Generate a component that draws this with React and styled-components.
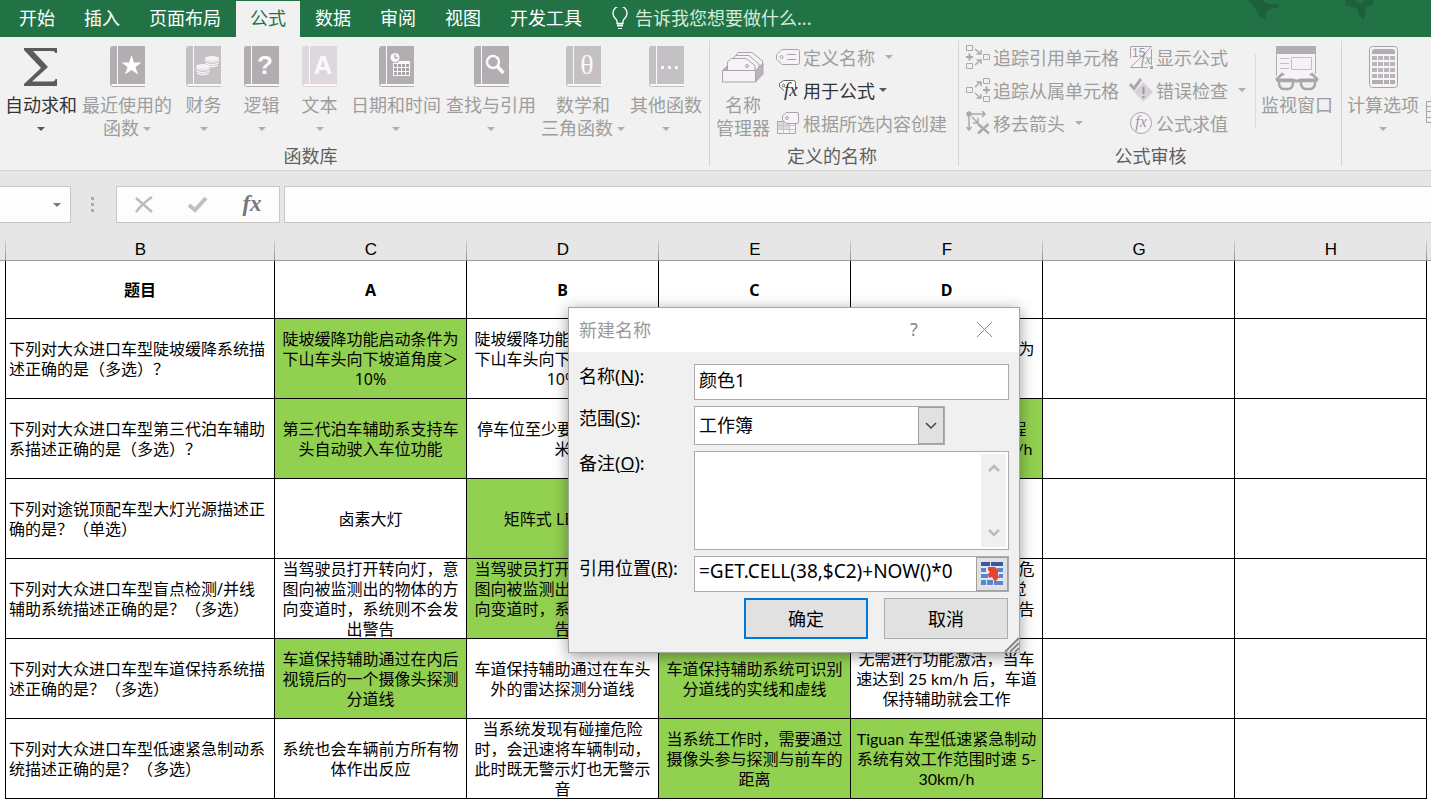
// App.jsx
import React, { useState } from "react";
import styled, { createGlobalStyle } from "styled-components";

const GRAY = "#b1adb1";
const LIGHT = "#c4c1c4";
const LINE = "#a9a4a9";

/* ---------- data ---------- */

const tabs = [
  "开始",
  "插入",
  "页面布局",
  "公式",
  "数据",
  "审阅",
  "视图",
  "开发工具",
];

const columns = [
  { id: "", width: 6 },
  { id: "B", width: 269 },
  { id: "C", width: 192 },
  { id: "D", width: 192 },
  { id: "E", width: 192 },
  { id: "F", width: 192 },
  { id: "G", width: 192 },
  { id: "H", width: 192 },
];

// every row: question, then the four options; right = index of the green options
const rows = [
  {
    cells: [
      "下列对大众进口车型陡坡缓降系统描\n述正确的是（多选）？",
      "陡坡缓降功能启动条件为\n下山车头向下坡道角度＞\n10%",
      "陡坡缓降功能启动条件为\n下山车头向下坡道角度＜\n10%",
      "",
      "陡坡缓降功能启动条件为\n任意角度",
    ],
    right: [1],
  },
  {
    cells: [
      "下列对大众进口车型第三代泊车辅助\n系描述正确的是（多选）？",
      "第三代泊车辅助系支持车\n头自动驶入车位功能",
      "停车位至少要比车长 0.8\n米",
      "",
      "第三代泊车辅助的过程\n中车速不能超过40 km/h",
    ],
    right: [1, 4],
  },
  {
    cells: [
      "下列对途锐顶配车型大灯光源描述正\n确的是？（单选）",
      "卤素大灯",
      "矩阵式 LED 大灯",
      "",
      "",
    ],
    right: [2],
  },
  {
    cells: [
      "下列对大众进口车型盲点检测/并线\n辅助系统描述正确的是？（多选）",
      "当驾驶员打开转向灯，意\n图向被监测出的物体的方\n向变道时，系统则不会发\n出警告",
      "当驾驶员打开转向灯，意\n图向被监测出的物体的方\n向变道时，系统会发出警\n告",
      "",
      "当驾驶员变道时如存在危\n险系统会同时发出视觉\n提示并通过灯光进行警告\n驾驶员",
    ],
    right: [2],
  },
  {
    cells: [
      "下列对大众进口车型车道保持系统描\n述正确的是？（多选）",
      "车道保持辅助通过在内后\n视镜后的一个摄像头探测\n分道线",
      "车道保持辅助通过在车头\n外的雷达探测分道线",
      "车道保持辅助系统可识别\n分道线的实线和虚线",
      "无需进行功能激活，当车\n速达到 25 km/h 后，车道\n保持辅助就会工作",
    ],
    right: [1, 3],
  },
  {
    cells: [
      "下列对大众进口车型低速紧急制动系\n统描述正确的是？（多选）",
      "系统也会车辆前方所有物\n体作出反应",
      "当系统发现有碰撞危险\n时，会迅速将车辆制动，\n此时既无警示灯也无警示\n音",
      "当系统工作时，需要通过\n摄像头参与探测与前车的\n距离",
      "Tiguan 车型低速紧急制动\n系统有效工作范围时速 5-\n30km/h",
    ],
    right: [3, 4],
  },
];

/* ---------- icons ---------- */

const Book = ({ color = GRAY, children }) => (
  <svg width="35" height="41" viewBox="0 0 35 41" fill="none">
    <path d="M3 0H7V38H3Q1 38 0 39V3Q0 0 3 0Z" fill={color} />
    <path d="M8 0H35V38H8Z" fill={color} />
    <path d="M0 38.500Q1 40.500 3 40.500H35" stroke={color} />
    <path d="M2 39H35" stroke="#fbf7fb" strokeWidth="2" />
    <path d="M7.500 0V38" stroke="#fbf7fb" />
    {children}
  </svg>
);

const SigmaIcon = () => (
  <svg width="34" height="41" viewBox="0 -2 34 41">
    <path
      d="M0 0H33V5H31.500Q31 3 28 3H9L24 19L8 33.500H28Q31 33.500 31.500 31H33V38H0V36L17 20L0 2Z"
      fill="#5b5b5b"
    />
  </svg>
);

const StarBook = () => (
  <Book>
    <path
      d="M21.500 9L24 16.500H31.500L25.500 21L28 28.500L21.500 24L15 28.500L17.500 21L11.500 16.500H19Z"
      fill="#fff"
    />
  </Book>
);

const Coins = ({ x, y }) => (
  <g transform={`translate(${x} ${y})`}>
    <ellipse cx="7" cy="2.500" rx="7" ry="2.500" fill="#f6f2f6" />
    <path
      d="M0 4Q7 8.500 14 4M0 6.500Q7 11 14 6.500M1 9Q7 12.500 13 9"
      stroke="#f6f2f6"
      strokeWidth="1.300"
    />
  </g>
);

const CoinBook = () => (
  <Book color={LIGHT}>
    <Coins x={19} y={10} />
    <Coins x={10} y={18} />
  </Book>
);

const LetterBook = ({ letter, color, serif }) => (
  <Book color={color}>
    <text
      x="21"
      y="28"
      textAnchor="middle"
      fontSize={serif ? 28 : 26}
      fontWeight={serif ? 400 : 700}
      fontFamily={serif ? '"Liberation Serif", serif' : '"Liberation Sans", sans-serif'}
      fill="#fbf8fb"
    >
      {letter}
    </text>
  </Book>
);

const DateBook = () => (
  <Book>
    <path d="M14 15H31V30H14Z" fill="#fbf8fb" />
    <circle cx="16" cy="11.500" r="5.500" fill={GRAY} />
    <circle cx="16" cy="11.500" r="4.500" fill="#fbf8fb" />
    <path d="M16 8.500V12H19" stroke="#8b878b" />
    {[18, 22, 26].map((y) =>
      [15, 19, 23, 27].map((x) => (
        <rect key={`${x}-${y}`} x={x} y={y} width="3" height="3" fill="#a5a1a5" />
      ))
    )}
  </Book>
);

const SearchBook = () => (
  <Book>
    <circle cx="19" cy="16" r="6" stroke="#fbf8fb" strokeWidth="2.500" />
    <path d="M23 20L29.500 27" stroke="#fbf8fb" strokeWidth="3.500" />
  </Book>
);

const DotsBook = () => (
  <Book color={LIGHT}>
    <path d="M12 20H15V23H12ZM19 20H22V23H19ZM26 20H29V23H26Z" fill="#fbf8fb" />
  </Book>
);

const NameManagerIcon = () => (
  <svg width="42" height="41" viewBox="0 -6 42 41" fill="#f8f2f8" stroke={LINE}>
    <path d="M12.500 14V5L16 .5H30L40.500 9V20" />
    <path d="M10 16V8L13.500 3.500H27L37 12V22" />
    <path d="M5.500 18V10L9 6.500H24L33 13.500V18" />
    <circle cx="25" cy="14" r="1.500" />
    <path d="M33.500 18.500L41 11V22L33.500 30Z" fill="#b8b4b8" />
    <path d="M.5 18.500L5 14V18.500Z" fill="#b8b4b8" />
    <path d="M.5 18.500H33.500V30H.5Z" />
  </svg>
);

const TagIcon = () => (
  <svg width="24" height="16" viewBox="0 0 24 16" fill="#f8f2f8" stroke={LINE}>
    <path d="M6 .5H21.500Q23.500 .5 23.500 2.500V13.500Q23.500 15.500 21.500 15.500H6L.5 10V6Z" />
    <circle cx="5.500" cy="8" r="1.500" />
    <path d="M11 5.500H20M11 10.500H20" />
  </svg>
);

const UseFormulaIcon = () => (
  <svg width="24" height="24" viewBox="0 0 24 24" fill="none" stroke="#666">
    <path d="M8 12.500L3.500 8.500V5.500L7.500 2.500H17.500Q19.500 2.500 19.500 4.500V11" fill="#fdfdfd" />
    <circle cx="7.500" cy="7.500" r="1.300" />
    <text x="8" y="18" fontSize="19" fontStyle="italic" fontFamily='"Liberation Serif", serif' fill="#333" stroke="none">
      fx
    </text>
  </svg>
);

const CreateIcon = () => (
  <svg width="24" height="24" viewBox="0 0 24 24" fill="#f8f2f8" stroke={LINE}>
    <path d="M1.500 10.500H19.500V22.500H1.500Z" />
    <path d="M1.500 10.500H13.500V18.500H1.500Z" fill="#ded8de" />
    <path d="M1.500 14.500H19.500M1.500 18.500H19.500M7.500 10.500V22.500M13.500 10.500V22.500" stroke="#c9c4c9" />
    <path d="M10 1.500H21Q22.500 1.500 22.500 3V11Q22.500 12.500 21 12.500H10L6.500 9V5Z" />
    <circle cx="11" cy="7" r="1.500" />
  </svg>
);

const PrecedentsIcon = () => (
  <svg width="24" height="24" viewBox="0 0 24 24" fill="none" stroke="#aaa">
    <path d="M.5 .5H6.500V5.500H.5ZM.5 18.500H6.500V23.500H.5ZM17.500 9.500H23.500V14.500H17.500Z" />
    <path d="M3.500 8.500V15.500M0 12H7" strokeWidth="2" />
    <path d="M9 4L14 8.500M10.500 9H15V5M9 20L14 15.500M10.500 15H15V19" strokeWidth="1.500" />
  </svg>
);

const DependentsIcon = () => (
  <svg width="24" height="24" viewBox="0 0 24 24" fill="none" stroke="#aaa">
    <path d="M.5 9.500H6.500V14.500H.5ZM17.500 .5H23.500V5.500H17.500ZM17.500 18.500H23.500V23.500H17.500Z" />
    <path d="M20.500 8.500V15.500M17 12H24" strokeWidth="2" />
    <path d="M9 9L14 4.500M10.500 4H15V8M9 15L14 19.500M10.500 20H15V16" strokeWidth="1.500" />
  </svg>
);

const RemoveArrowsIcon = () => (
  <svg width="24" height="24" viewBox="0 0 24 24" fill="none" stroke="#aaa" strokeWidth="1.500">
    <circle cx="3" cy="3" r="2" fill="#aaa" />
    <path d="M5 3H19M16 0L19 3L16 6M3 5V19M.5 16L3 19L5.500 16" />
    <path d="M6 6L11.500 11.500M12 7V12H7" />
    <path d="M12 13L23 22.500M22.500 13L12 22.500" strokeWidth="2.500" />
  </svg>
);

const ShowFormulasIcon = () => (
  <svg width="24" height="24" viewBox="0 0 24 24" fill="none" stroke={LINE}>
    <path d="M1.500 13V1.500H22.500L1.500 22.500H19M22.500 4V20" fill="#f8f2f8" />
    <text x="3" y="12" fontSize="12" fontFamily='"Liberation Sans", sans-serif' fill="#999" stroke="none">
      15
    </text>
    <text x="12" y="19" fontSize="14" fontStyle="italic" fontFamily='"Liberation Serif", serif' fill="#999" stroke="none">
      fx
    </text>
    <path d="M21 21H24V24H21Z" fill={LINE} stroke="none" />
  </svg>
);

const ErrorCheckIcon = () => (
  <svg width="24" height="24" viewBox="0 0 24 24" fill="none">
    <path d="M14.500 4L24 14L14.500 23.500L5 14Z" fill="#d8d2d8" />
    <path d="M1 6L5 10.500L12 1" stroke="#aaa" strokeWidth="3" />
    <path d="M14.500 9V16M14.500 18V20" stroke="#999" strokeWidth="2" />
  </svg>
);

const EvaluateIcon = () => (
  <svg width="24" height="24" viewBox="0 0 24 24" fill="none">
    <circle cx="12" cy="12" r="10.500" fill="#f8f2f8" stroke={LINE} />
    <text x="12" y="16" textAnchor="middle" fontSize="16" fontStyle="italic" fontFamily='"Liberation Serif", serif' fill="#999">
      fx
    </text>
  </svg>
);

const WatchIcon = () => (
  <svg width="44" height="45" viewBox="0 0 44 45" fill="none">
    <path d="M2 7H40V32H2Z" fill="#f8f2f8" />
    <path d="M1.500 7V30M40.500 7V28" stroke={GRAY} />
    <path d="M1 0H41V8H1Z" fill={GRAY} />
    <path d="M5 12.500H14M5 17.500H14M5 22.500H14M16.500 11.500H36.500V23.500H16.500Z" stroke="#c4bfc4" />
    <path d="M1 34L7 28L9 29M43 34L37 28L35 29" stroke="#aaa5aa" strokeWidth="2.500" />
    <path d="M1 34H18Q22 36 26 34H43" stroke="#aaa5aa" strokeWidth="3" />
    <path
      d="M4 35H18V38Q17 43 13 43H9Q5 43 4 38ZM26 35H40V38Q39 43 35 43H31Q27 43 26 38Z"
      fill="#f1f1f1"
      stroke="#aaa5aa"
      strokeWidth="2.500"
    />
  </svg>
);

const CalculatorIcon = () => (
  <svg width="29" height="42" viewBox="0 0 29 42">
    <rect x=".5" y=".5" width="28" height="41" rx="3" fill="#f8f2f8" stroke={LINE} />
    <path d="M3 8V6Q3 3 6 3H23Q26 3 26 6V8Z" fill={GRAY} />
    {[10, 16, 22, 28].map((y) =>
      [3, 9, 15, 21].map((x) => (
        <rect key={`${x}-${y}`} x={x} y={y} width="5" height="4" fill="#b9b5b9" />
      ))
    )}
    <path d="M3 34H14V38H3ZM15 34H20V38H15ZM21 34H26V38H21Z" fill={GRAY} />
  </svg>
);

const SheetIcon = () => (
  <svg width="24" height="22" viewBox="0 0 24 22" fill="none" stroke={LINE}>
    <path d="M.5 .5H23.500V21.500H.5ZM.5 5.500H23.500M.5 10.500H23.500M.5 16.500H23.500M8.500 5.500V21.500M16.500 5.500V21.500" />
  </svg>
);

const BulbIcon = () => (
  <svg width="16" height="23" viewBox="0 0 16 23" fill="none" stroke="#fff">
    <path d="M5 16.500V14Q4.500 12.500 2.500 10.500A7 7 0 1 1 13.500 10.500Q11.500 12.500 11 14V16.500Z" strokeWidth="1.300" />
    <path d="M5 18.500H11" strokeWidth="2" />
    <path d="M6 21.500H10" />
  </svg>
);

const Birds = styled.svg`
  margin-left: auto;
  margin-right: 57px;
  flex: none;
`;

const PickerIcon = () => (
  <svg width="22" height="24" viewBox="0 0 22 24">
    <path d="M0 0H22V24H0Z" fill="#dfe8f6" />
    <path d="M0 0H9V4H0ZM10 0H22V4H10Z" fill="#38589c" />
    <path d="M0 6H5V10H0ZM16 6H22V10H16ZM0 12H7V16H0ZM18 12H22V16H18ZM0 18H5V23H0ZM6 18H12V23H6ZM13 19H22V23H13Z" fill="#5d84cf" />
    <path d="M7 5L14 5L17 8V13L18 15L14 20L11 15L8 16L7 12L9 10L7 8Z" fill="#e8432b" />
  </svg>
);

const Chevron = ({ up, color = "#444", bold }) => (
  <svg width="12" height="8" viewBox="0 0 12 8" fill="none" stroke={color} strokeWidth={bold ? 2.5 : 1.5}>
    <path d={up ? "M1 7L6 2L11 7" : "M1 1L6 6L11 1"} />
  </svg>
);

/* ---------- ribbon ---------- */

const BigButton = ({ icon, lines, caret, enabled }) => (
  <Big disabled={!enabled}>
    <BigIcon>{icon}</BigIcon>
    <span>{lines[0]}</span>
    <SecondLine>
      {lines[1]}
      {caret && <Caret />}
    </SecondLine>
  </Big>
);

const SmallButton = ({ icon, text, caret, enabled }) => (
  <Small disabled={!enabled}>
    <SmallIcon>{icon}</SmallIcon>
    {text}
    {caret && <SmallCaret $near={enabled} />}
  </Small>
);

const Ribbon = () => (
  <RIBBON>
    <Group $pad="0 5px 0 3px">
      <Tools>
        <BigButton enabled icon={<SigmaIcon />} lines={["自动求和"]} caret />
        <BigButton icon={<StarBook />} lines={["最近使用的", "函数"]} caret />
        <BigButton icon={<CoinBook />} lines={["财务"]} caret />
        <BigButton icon={<LetterBook letter="?" />} lines={["逻辑"]} caret />
        <BigButton icon={<LetterBook letter="A" color="#ded8de" />} lines={["文本"]} caret />
        <BigButton icon={<DateBook />} lines={["日期和时间"]} caret />
        <BigButton icon={<SearchBook />} lines={["查找与引用"]} caret />
        <BigButton icon={<LetterBook letter="θ" color={LIGHT} serif />} lines={["数学和", "三角函数"]} caret />
        <BigButton icon={<DotsBook />} lines={["其他函数"]} caret />
      </Tools>
      <GroupName $library>函数库</GroupName>
    </Group>
    <Group $pad="0 8px 0 4px">
      <Tools>
        <BigButton icon={<NameManagerIcon />} lines={["名称", "管理器"]} />
        <SmallColumn>
          <SmallButton icon={<TagIcon />} text="定义名称" caret />
          <SmallButton enabled icon={<UseFormulaIcon />} text="用于公式" caret />
          <SmallButton icon={<CreateIcon />} text="根据所选内容创建" />
        </SmallColumn>
        <Spacer />
      </Tools>
      <GroupName>定义的名称</GroupName>
    </Group>
    <Group $pad="0 6px 0 7px">
      <Tools>
        <SmallColumn>
          <SmallButton icon={<PrecedentsIcon />} text="追踪引用单元格" />
          <SmallButton icon={<DependentsIcon />} text="追踪从属单元格" />
          <SmallButton icon={<RemoveArrowsIcon />} text="移去箭头" caret />
        </SmallColumn>
        <SmallColumn $second>
          <SmallButton icon={<ShowFormulasIcon />} text="显示公式" />
          <SmallButton icon={<ErrorCheckIcon />} text="错误检查" caret />
          <SmallButton icon={<EvaluateIcon />} text="公式求值" />
        </SmallColumn>
        <Divider />
        <BigButton icon={<WatchIcon />} lines={["监视窗口"]} />
      </Tools>
      <GroupName>公式审核</GroupName>
    </Group>
    <Group $pad="0 3px" $last>
      <Tools>
        <BigButton icon={<CalculatorIcon />} lines={["计算选项"]} caret />
        <SheetButton disabled aria-label="计算工作表">
          <SheetIcon />
        </SheetButton>
      </Tools>
    </Group>
  </RIBBON>
);

/* ---------- sheet ---------- */

const Sheet = () => (
  <SHEET>
    <colgroup>
      {columns.map((c) => (
        <Col key={c.id} $w={c.width} />
      ))}
      <Col $w={4} />
    </colgroup>
    <thead>
      <tr>
        {columns.map((c) => (
          <ColumnHead key={c.id}>{c.id}</ColumnHead>
        ))}
        <ColumnHead $edge />
      </tr>
    </thead>
    <tbody>
      <tr>
        <EdgeCell />
        {["题目", "A", "B", "C", "D", "", ""].map((t, i) => (
          <TitleCell key={i}>{t}</TitleCell>
        ))}
      </tr>
      {rows.map((row, r) => (
        <tr key={r}>
          <EdgeCell />
          {row.cells.map((text, i) => (
            <Cell key={i} $left={i === 0} $green={row.right.includes(i)} $lato={i === 4}>
              <CellText>{text}</CellText>
            </Cell>
          ))}
          <Cell />
          <Cell />
        </tr>
      ))}
    </tbody>
  </SHEET>
);

/* ---------- dialog ---------- */

const NameDialog = () => {
  const [name, setName] = useState("颜色1");
  const [note, setNote] = useState("");
  const [refersTo, setRefersTo] = useState("=GET.CELL(38,$C2)+NOW()*0");

  return (
    <DIALOG role="dialog" aria-labelledby="dialog-title">
      <TitleBar>
        <DialogTitle id="dialog-title">新建名称</DialogTitle>
        <TitleButton aria-label="帮助">?</TitleButton>
        <TitleButton aria-label="关闭">
          <svg width="17" height="17" viewBox="0 0 17 17" stroke="#888">
            <path d="M1 1L16 16M16 1L1 16" />
          </svg>
        </TitleButton>
      </TitleBar>
      <Form onSubmit={(e) => e.preventDefault()}>
        <Label htmlFor="name">
          名称(<u>N</u>):
        </Label>
        <Field>
          <Input id="name" value={name} onChange={(e) => setName(e.target.value)} />
        </Field>

        <Label htmlFor="scope">
          范围(<u>S</u>):
        </Label>
        <SelectField>
          <Select id="scope">
            <option>工作簿</option>
          </Select>
          <SelectArrow>
            <Chevron />
          </SelectArrow>
        </SelectField>

        <Label htmlFor="note">
          备注(<u>O</u>):
        </Label>
        <NoteField>
          <TextArea id="note" value={note} onChange={(e) => setNote(e.target.value)} />
          <ScrollTrack>
            <Chevron up bold color="#bbb" />
            <Chevron bold color="#bbb" />
          </ScrollTrack>
        </NoteField>

        <Label htmlFor="refers">
          引用位置(<u>R</u>):
        </Label>
        <Field>
          <Input id="refers" $formula value={refersTo} onChange={(e) => setRefersTo(e.target.value)} />
          <PickerButton type="button" aria-label="选择区域">
            <PickerIcon />
          </PickerButton>
        </Field>

        <Actions>
          <DialogButton $primary>确定</DialogButton>
          <DialogButton type="button">取消</DialogButton>
        </Actions>
      </Form>
      <Grip width="15" height="15" viewBox="0 0 15 15" stroke="#888" strokeWidth="2">
        <path d="M1 15L15 1M6 15L15 6M11 15L15 11" />
      </Grip>
    </DIALOG>
  );
};

const App = () => {
  const [active, setActive] = useState("公式");

  return (
    <PAGE>
      <GlobalStyle />
      <TABBAR>
        {tabs.map((t) => (
          <Tab key={t} $active={t === active} onClick={() => setActive(t)}>
            {t}
          </Tab>
        ))}
        <TellMe>
          <BulbIcon />
          <TellInput aria-label="告诉我" placeholder="告诉我您想要做什么..." />
        </TellMe>
        <Birds width="126" height="37" viewBox="0 0 126 37" fill="#1c6139">
          <path d="M0 0H14L20 4L31 4L29 8L21 9L18 13L19 20L11 16L7 8Z" />
          <path d="M97 0L106 0L112 3L119 0H126L125 4L118 7L116 20L111 15L109 8L97 5Z" />
        </Birds>
      </TABBAR>

      <Ribbon />

      <FORMULABAR>
        <NameBox aria-label="名称框">
          <Caret />
        </NameBox>
        <Dots width="4" height="16" viewBox="0 0 4 16" fill="#aaa">
          <path d="M0 0H3V3H0ZM0 6H3V9H0ZM0 12H3V15H0Z" />
        </Dots>
        <EntryButtons>
          <EntryButton aria-label="取消输入">
            <svg width="18" height="18" viewBox="0 0 18 18" fill="none" stroke="#bcbcbc" strokeWidth="2.500">
              <path d="M1 2L17 16M17 1Q8 7 1 16" />
            </svg>
          </EntryButton>
          <EntryButton aria-label="输入">
            <svg width="20" height="18" viewBox="0 0 20 18" fill="none" stroke="#c0c0c0" strokeWidth="4">
              <path d="M1 9L7 14L18 2" />
            </svg>
          </EntryButton>
          <EntryButton $fx>fx</EntryButton>
        </EntryButtons>
        <FormulaInput aria-label="编辑栏" />
      </FORMULABAR>

      <Sheet />
      <NameDialog />
    </PAGE>
  );
};

export default App;

/* ---------- styles ---------- */

const GlobalStyle = createGlobalStyle`
  * {
    box-sizing: border-box;
  }
  body {
    margin: 0;
    background: #fff;
    overflow: hidden;
  }
  body, button, input, select, textarea {
    font-family: "Noto Sans", "Noto Sans CJK SC", sans-serif;
    font-size: 18px;
    text-spacing-trim: space-all;
  }
  button {
    padding: 0;
    border: none;
    background: none;
    color: inherit;
  }
  svg {
    display: block;
  }
`;

const PAGE = styled.div`
  position: relative;
`;

const TABBAR = styled.nav`
  display: flex;
  height: 37px;
  padding-left: 5px;
  background: #217346;
`;

const Tab = styled.button`
  flex: none;
  margin: 1px 1px 0 0;
  padding: 0 14px 4px;
  color: ${(p) => (p.$active ? "#217346" : "#fff")};
  background: ${(p) => (p.$active ? "#f1f1f1" : "transparent")};
`;

const TellMe = styled.label`
  display: flex;
  align-items: center;
  gap: 7px;
  margin-left: 15px;
`;

const TellInput = styled.input`
  width: 200px;
  padding: 0 0 2px;
  border: none;
  background: none;
  &::placeholder {
    color: #d6eadf;
    opacity: 1;
  }
`;

const RIBBON = styled.div`
  display: flex;
  padding: 4px 0;
  background: #f1f1f1;
  border-bottom: 1px solid #d2d2d2;
  overflow: hidden;
`;

const Group = styled.section`
  display: flex;
  flex: none;
  flex-direction: column;
  justify-content: space-between;
  height: 125px;
  padding: ${(p) => p.$pad};
  border-right: 1px solid ${(p) => (p.$last ? "transparent" : "#d4d4d4")};
`;

const Tools = styled.div`
  display: flex;
  gap: 1px;
`;

const Spacer = styled.div`
  width: 2px;
`;

const GroupName = styled.div`
  padding-right: ${(p) => (p.$library ? "86px" : "0")};
  line-height: 20px;
  text-align: center;
  color: #5f5f5f;
`;

const Big = styled.button`
  display: flex;
  flex-direction: column;
  align-items: center;
  min-width: 57px;
  padding: 5px 2px 0;
  line-height: 23px;
  white-space: nowrap;
  color: ${(p) => (p.disabled ? "#9d9d9d" : "#333")};
`;

const BigIcon = styled.span`
  display: flex;
  align-items: flex-start;
  justify-content: center;
  height: 41px;
  margin-bottom: 7px;
`;

const SecondLine = styled.span`
  display: flex;
  align-items: center;
  gap: 4px;
  height: 23px;
`;

const Caret = styled.span`
  border: 4px solid transparent;
  border-top-color: currentColor;
  border-bottom: none;
  opacity: 0.8;
`;

const SmallCaret = styled(Caret)`
  margin-left: ${(p) => (p.$near ? "1px" : "7px")};
`;

const SmallColumn = styled.div`
  display: flex;
  flex-direction: column;
  align-items: flex-start;
  margin-left: ${(p) => (p.$second ? "9px" : "0")};
  ${Big} + & {
    margin-left: 3px;
  }
`;

const Small = styled.button`
  display: flex;
  align-items: center;
  gap: 3px;
  height: 33px;
  padding-bottom: 2px;
  white-space: nowrap;
  color: ${(p) => (p.disabled ? "#9d9d9d" : "#333")};
`;

const SmallIcon = styled.span`
  display: flex;
  justify-content: center;
  width: 24px;
`;

const Divider = styled.div`
  width: 1px;
  height: 74px;
  margin: 13px 2px 0 8px;
  background: #dcdcdc;
`;

const SheetButton = styled.button`
  align-self: flex-end;
  margin: 0 0 17px 4px;
`;

const FORMULABAR = styled.div`
  display: flex;
  align-items: center;
  height: 65px;
  padding-top: 2px;
  background: #e6e6e6;
`;

const Box = styled.div`
  display: flex;
  height: 37px;
  background: #fdfdfd;
  border: 1px solid #c6c6c6;
`;

const NameBox = styled(Box).attrs({ as: "button" })`
  align-items: center;
  justify-content: flex-end;
  width: 71px;
  padding-right: 9px;
  border-left: none;
  color: #555;
`;

const Dots = styled.svg`
  margin: 0 21px 0 20px;
`;

const EntryButtons = styled(Box)`
  width: 164px;
  margin-right: 4px;
`;

const EntryButton = styled.button`
  display: flex;
  flex: 1;
  align-items: center;
  justify-content: center;
  ${(p) =>
    p.$fx &&
    `
    padding-bottom: 2px;
    font: italic bold 23px "Liberation Serif", serif;
    color: #777;
  `}
`;

const FormulaInput = styled.input`
  flex: 1;
  height: 37px;
  padding: 0 6px;
  background: #fdfdfd;
  border: 1px solid #c6c6c6;
  border-right: none;
`;

const SHEET = styled.table`
  width: 100%;
  table-layout: fixed;
  border-spacing: 0;
  font-size: 16px;
  line-height: 20px;
`;

const Col = styled.col`
  width: ${(p) => p.$w}px;
`;

const ColumnHead = styled.th`
  height: 25px;
  padding: 4px 0 0;
  font: 17px/20px "Liberation Sans", sans-serif;
  background: ${(p) =>
    p.$edge ? "#e6e6e6" : "linear-gradient(#e6e6e6, #8f8f8f) right / 1px 100% no-repeat #e6e6e6"};
  border-bottom: 1px solid #9b9b9b;
`;

const Cell = styled.td`
  height: 80px;
  padding: ${(p) => (p.$left ? "0 0 0 3px" : "0")};
  text-align: ${(p) => (p.$left ? "left" : "center")};
  background: ${(p) => (p.$green ? "#92d050" : "#fff")};
  border-right: 1px solid #000;
  border-bottom: 1px solid #000;
  ${(p) => p.$lato && `font-family: Lato, "Noto Sans CJK SC", sans-serif;`}
`;

const CellText = styled.div`
  margin: -2px 0;
  white-space: pre;
`;

const TitleCell = styled(Cell)`
  height: 58px;
  font-weight: 700;
`;

const EdgeCell = styled.td`
  padding: 0;
  border-right: 1px solid #000;
`;

const DIALOG = styled.div`
  position: absolute;
  top: 307px;
  left: 568px;
  width: 452px;
  background: #f0f0f0;
  border: 1px solid #a5a5a5;
  box-shadow: 0 3px 14px rgba(0, 0, 0, 0.4);
`;

const TitleBar = styled.header`
  display: flex;
  align-items: center;
  height: 44px;
  padding: 0 0 2px 10px;
  background: #fff;
  color: #999;
`;

const DialogTitle = styled.h2`
  flex: 1;
  margin: 0;
  font-size: 18px;
  font-weight: 400;
`;

const TitleButton = styled.button`
  display: flex;
  align-items: center;
  justify-content: center;
  width: 70px;
  height: 42px;
  color: #888;
`;

const Form = styled.form`
  display: grid;
  grid-template-columns: 115px minmax(0, 1fr);
  row-gap: 6px;
  padding: 12px 10px 13px;
`;

const Label = styled.label`
  line-height: 24px;
  white-space: nowrap;
`;

const Field = styled.div`
  display: flex;
  height: 36px;
  background: #fff;
  border: 1px solid #ababab;
`;

const Input = styled.input`
  flex: 1;
  min-width: 0;
  padding: 0 4px 6px;
  border: none;
  outline: none;
  background: none;
  font-size: ${(p) => (p.$formula ? "19px" : "18px")};
`;

const SelectField = styled(Field)`
  position: relative;
  width: 251px;
  height: 39px;
`;

const Select = styled.select`
  flex: 1;
  padding: 0 4px 2px;
  appearance: none;
  border: none;
  background: none;
  color: #000;
`;

const SelectArrow = styled.span`
  position: absolute;
  top: 0;
  right: 0;
  display: flex;
  align-items: center;
  justify-content: center;
  width: 26px;
  height: 37px;
  background: #e1e1e1;
  border: 1px solid #a0a0a0;
  pointer-events: none;
`;

const NoteField = styled(Field)`
  height: 99px;
  padding: 2px;
`;

const TextArea = styled.textarea`
  flex: 1;
  min-width: 0;
  padding: 2px;
  border: none;
  outline: none;
  resize: none;
`;

const ScrollTrack = styled.div`
  display: flex;
  flex-direction: column;
  align-items: center;
  justify-content: space-between;
  width: 25px;
  padding: 10px 0;
  background: #f0f0f0;
`;

const PickerButton = styled.button`
  display: flex;
  align-items: center;
  justify-content: center;
  width: 32px;
  background: #e1e1e1;
  border: 1px solid #a0a0a0;
`;

const Actions = styled.div`
  grid-column: 1 / -1;
  display: flex;
  justify-content: flex-end;
  gap: 16px;
  padding-right: 1px;
`;

const DialogButton = styled.button`
  width: 124px;
  height: 41px;
  padding-bottom: 2px;
  background: #e1e1e1;
  border: ${(p) => (p.$primary ? "2px solid #0078d7" : "1px solid #adadad")};
`;

const Grip = styled.svg`
  position: absolute;
  right: 0;
  bottom: 0;
`;
